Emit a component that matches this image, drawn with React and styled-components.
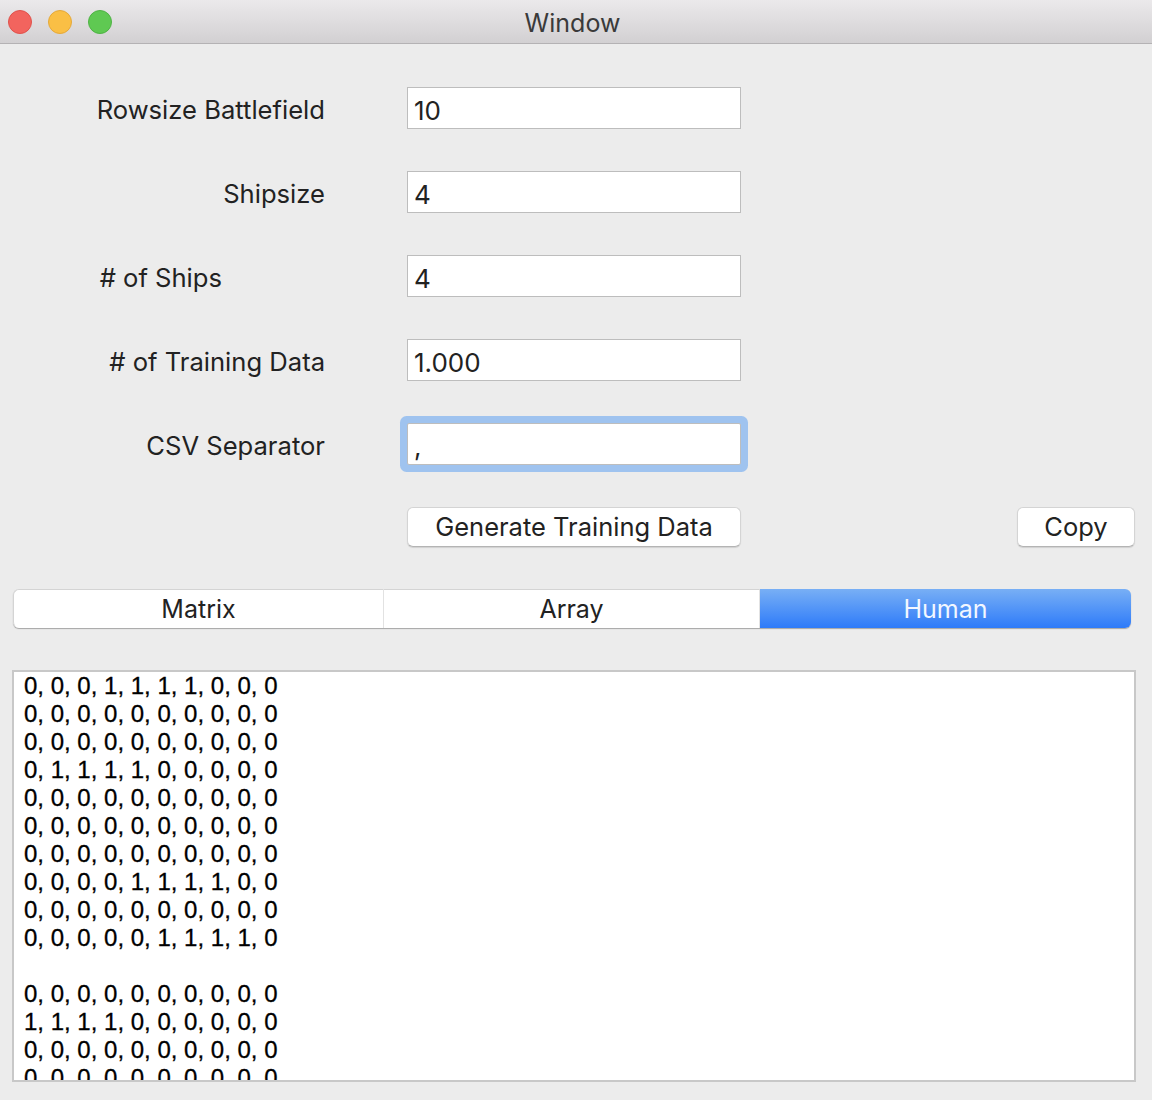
import React from 'react';
import styled, { createGlobalStyle } from 'styled-components';

const GlobalStyle = createGlobalStyle`
  html, body {
    margin: 0;
    padding: 0;
    background: #ececec;
  }
`;

const Window = styled.div`
  width: 1152px;
  height: 1100px;
  overflow: hidden;
  display: flex;
  flex-direction: column;
  background: #ececec;
  font-family: Inter, 'Liberation Sans', sans-serif;
  color: #222;
`;

const TitleBar = styled.div`
  position: relative;
  height: 44px;
  flex: none;
  display: flex;
  align-items: center;
  justify-content: center;
  padding: 2px 7px 0 0;
  box-sizing: border-box;
  border-bottom: 1px solid #b4b2b4;
  background: linear-gradient(#ebe9eb, #d2d0d2);
  font-size: 25px;
  color: #3a3a3a;
`;

const Lights = styled.div`
  position: absolute;
  left: 8px;
  top: 10px;
  display: flex;
  gap: 16px;
`;

const Light = styled.span`
  width: 24px;
  height: 24px;
  box-sizing: border-box;
  border-radius: 50%;
  background: ${(p) => p.$color};
  border: 1px solid ${(p) => p.$edge};
`;

const Form = styled.div`
  display: flex;
  flex-direction: column;
  gap: 42px;
  padding-top: 43px;
`;

const Row = styled.div`
  display: flex;
  align-items: center;
  height: 42px;
`;

const Label = styled.label`
  width: 325px;
  flex: none;
  box-sizing: border-box;
  padding-top: 2px;
  text-align: right;
  font-size: 25.6px;
  padding-right: ${(p) => p.$inset || 0}px;
`;

const Field = styled.input`
  width: 334px;
  height: 42px;
  margin-left: 82px;
  box-sizing: border-box;
  padding: 4px 6px 0;
  background: #fff;
  border: 1px solid #bdbdbd;
  outline: none;
  font-family: Inter, 'Liberation Sans', sans-serif;
  font-size: 26px;
  color: #222;
  box-shadow: ${(p) => (p.$focused ? '0 0 0 7px #9fc3ef' : 'none')};
  border-radius: ${(p) => (p.$focused ? '2px' : '0')};
`;

const ButtonRow = styled.div`
  display: flex;
  align-items: center;
  padding: 42px 17px 0 407px;
  justify-content: space-between;
`;

const PushButton = styled.button`
  width: ${(p) => p.$width}px;
  height: 40px;
  padding: 0 0 2px;
  background: #fff;
  border: 1px solid #d4d4d4;
  border-bottom-color: #b4b4b4;
  border-radius: 6px;
  box-shadow: 0 1px 1px rgba(0, 0, 0, 0.12);
  font-family: Inter, 'Liberation Sans', sans-serif;
  font-size: 25.5px;
  color: #222;
`;

const Tabs = styled.div`
  display: flex;
  width: 1118px;
  height: 39px;
  margin: 42px 0 0 13px;
  border-radius: 6px;
  box-shadow: 0 1px 1px rgba(0, 0, 0, 0.3);
`;

const Tab = styled.div`
  width: ${(p) => p.$width}px;
  box-sizing: border-box;
  display: flex;
  align-items: center;
  justify-content: center;
  font-size: 25px;
  background: #fff;
  border-top: 1px solid #d4d4d4;
  border-right: 1px solid #e2e2e2;
  &:first-child {
    border-left: 1px solid #d4d4d4;
    border-radius: 6px 0 0 6px;
  }
  ${(p) =>
    p.$active &&
    `
    color: #f2f7ff;
    border: none;
    border-radius: 0 6px 6px 0;
    background: linear-gradient(#78aff5, #2e7bf9);
  `}
`;

const Output = styled.div`
  width: 1124px;
  height: 412px;
  margin: 42px 0 0 12px;
  box-sizing: border-box;
  padding: 0 0 0 10px;
  overflow: hidden;
  background: #fff;
  border: 2px solid #c8c8c8;
`;

const OutputText = styled.pre`
  margin: 0;
  font-family: 'Liberation Sans', Arial, sans-serif;
  font-size: 24px;
  line-height: 28px;
  color: #000;
  -webkit-text-stroke: 0.3px #000;
`;

const fields = [
  { label: 'Rowsize Battlefield', value: '10' },
  { label: 'Shipsize', value: '4' },
  { label: '# of Ships', value: '4', inset: 103 },
  { label: '# of Training Data', value: '1.000' },
  { label: 'CSV Separator', value: ',', focused: true },
];

const output = [
  '0, 0, 0, 1, 1, 1, 1, 0, 0, 0',
  '0, 0, 0, 0, 0, 0, 0, 0, 0, 0',
  '0, 0, 0, 0, 0, 0, 0, 0, 0, 0',
  '0, 1, 1, 1, 1, 0, 0, 0, 0, 0',
  '0, 0, 0, 0, 0, 0, 0, 0, 0, 0',
  '0, 0, 0, 0, 0, 0, 0, 0, 0, 0',
  '0, 0, 0, 0, 0, 0, 0, 0, 0, 0',
  '0, 0, 0, 0, 1, 1, 1, 1, 0, 0',
  '0, 0, 0, 0, 0, 0, 0, 0, 0, 0',
  '0, 0, 0, 0, 0, 1, 1, 1, 1, 0',
  '',
  '0, 0, 0, 0, 0, 0, 0, 0, 0, 0',
  '1, 1, 1, 1, 0, 0, 0, 0, 0, 0',
  '0, 0, 0, 0, 0, 0, 0, 0, 0, 0',
  '0, 0, 0, 0, 0, 0, 0, 0, 0, 0',
].join('\n');

const App = () => (
  <Window>
    <GlobalStyle />
    <TitleBar>
      <Lights>
        <Light $color="#f2645e" $edge="#e0524c" />
        <Light $color="#fabf45" $edge="#e5a93a" />
        <Light $color="#5fc952" $edge="#4fb345" />
      </Lights>
      Window
    </TitleBar>
    <Form>
      {fields.map((f) => (
        <Row key={f.label}>
          <Label $inset={f.inset}>{f.label}</Label>
          <Field defaultValue={f.value} $focused={f.focused} readOnly />
        </Row>
      ))}
    </Form>
    <ButtonRow>
      <PushButton $width={334}>Generate Training Data</PushButton>
      <PushButton $width={118}>Copy</PushButton>
    </ButtonRow>
    <Tabs>
      <Tab $width={371}>Matrix</Tab>
      <Tab $width={376}>Array</Tab>
      <Tab $width={371} $active>Human</Tab>
    </Tabs>
    <Output>
      <OutputText>{output}</OutputText>
    </Output>
  </Window>
);

export default App;
